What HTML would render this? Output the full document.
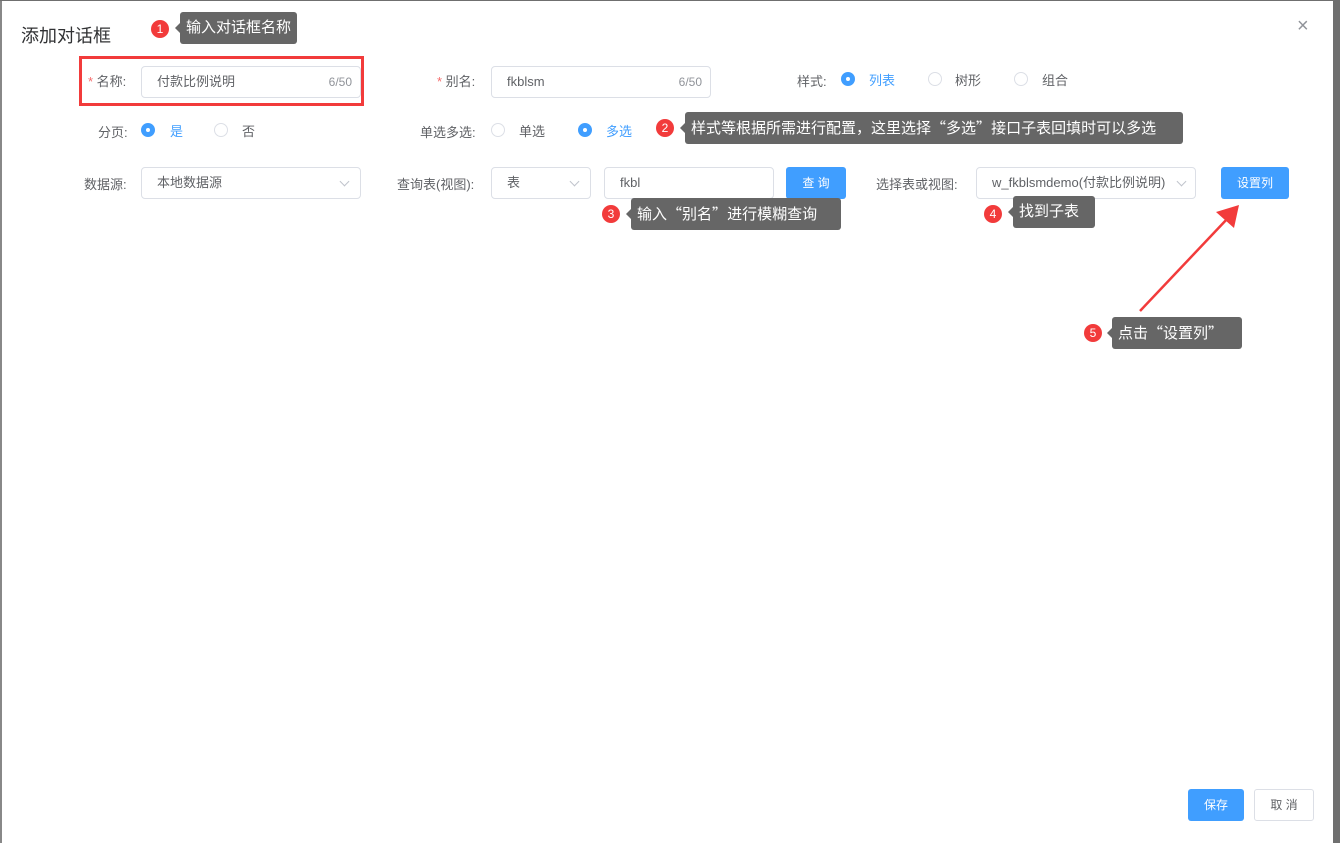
<!DOCTYPE html>
<html><head><meta charset="utf-8"><style>
*{margin:0;padding:0;box-sizing:border-box}
body{width:1340px;height:843px;position:relative;overflow:hidden;background:#6f6f6f;font-family:"Liberation Sans","Noto Sans CJK SC",sans-serif;font-size:13px;color:#606266}
.modal{position:absolute;left:0;top:1px;width:1333px;height:842px;background:#fff;border-left:2px solid #888}
.a{position:absolute;white-space:nowrap}
.lbl{color:#606266;font-size:13px}
.inp{position:absolute;height:32px;border:1px solid #dcdfe6;border-radius:4px;background:#fff;font-size:13px;color:#606266;line-height:30px;padding-left:15px}
.cnt{position:absolute;right:8px;top:0;color:#909399;font-size:12px}
.radio{position:absolute;width:14px;height:14px;border:1px solid #dcdfe6;border-radius:50%;background:#fff}
.radio.on{background:#409eff;border-color:#409eff}
.radio.on:after{content:"";position:absolute;left:4px;top:4px;width:4px;height:4px;border-radius:50%;background:#fff}
.blue{color:#409eff}
.btn{position:absolute;background:#409eff;color:#fff;border-radius:3px;text-align:center;font-size:12px}
.arr{position:absolute;right:12px;top:10px;width:7px;height:7px;border-right:1px solid #c0c4cc;border-bottom:1px solid #c0c4cc;transform:rotate(45deg)}
.tip{position:absolute;background:#666;color:#fff;font-size:15px;border-radius:3px;height:32px;line-height:32px;padding:0 6px}
.tip:before{content:"";position:absolute;left:-5px;top:11px;border:5px solid transparent;border-left:0;border-right-color:#666}
.q{font-family:"Noto Sans CJK SC",sans-serif}
.num{position:absolute;width:18px;height:18px;border-radius:50%;background:#f23b3b;color:#fff;font-size:12px;text-align:center;line-height:18px}
.req{color:#f56c6c}
</style></head><body>
<div class="modal"></div>
<div class="a" style="left:21px;top:22px;font-size:18px;color:#303133">添加对话框</div>
<div class="a" style="left:1297px;top:15px;font-size:20px;color:#909399;font-weight:300">×</div>

<div class="a" style="left:79px;top:56px;width:285px;height:50px;border:3px solid #f23b3b"></div>
<div class="a lbl" style="left:88px;top:71px"><span class="req">*</span> 名称:</div>
<div class="inp" style="left:141px;top:66px;width:220px">付款比例说明<span class="cnt">6/50</span></div>
<div class="a lbl" style="left:437px;top:71px"><span class="req">*</span> 别名:</div>
<div class="inp" style="left:491px;top:66px;width:220px">fkblsm<span class="cnt">6/50</span></div>
<div class="a lbl" style="left:797px;top:71px">样式:</div>
<div class="radio on" style="left:841px;top:72px"></div><div class="a blue" style="left:869px;top:70px">列表</div>
<div class="radio" style="left:928px;top:72px"></div><div class="a" style="left:955px;top:70px">树形</div>
<div class="radio" style="left:1014px;top:72px"></div><div class="a" style="left:1042px;top:70px">组合</div>

<div class="a lbl" style="left:98px;top:122px">分页:</div>
<div class="radio on" style="left:141px;top:123px"></div><div class="a blue" style="left:170px;top:121px">是</div>
<div class="radio" style="left:214px;top:123px"></div><div class="a" style="left:242px;top:121px">否</div>
<div class="a lbl" style="left:420px;top:122px">单选多选:</div>
<div class="radio" style="left:491px;top:123px"></div><div class="a" style="left:519px;top:121px">单选</div>
<div class="radio on" style="left:578px;top:123px"></div><div class="a blue" style="left:606px;top:121px">多选</div>

<div class="a lbl" style="left:84px;top:174px">数据源:</div>
<div class="inp" style="left:141px;top:167px;width:220px">本地数据源<span class="arr"></span></div>
<div class="a lbl" style="left:397px;top:174px">查询表(视图):</div>
<div class="inp" style="left:491px;top:167px;width:100px">表<span class="arr"></span></div>
<div class="inp" style="left:604px;top:167px;width:170px">fkbl</div>
<div class="btn" style="left:786px;top:167px;width:60px;height:32px;line-height:32px">查 询</div>
<div class="a lbl" style="left:876px;top:174px">选择表或视图:</div>
<div class="inp" style="left:976px;top:167px;width:220px;padding-left:15px">w_fkblsmdemo(付款比例说明)<span class="arr" style="right:10px"></span></div>
<div class="btn" style="left:1221px;top:167px;width:68px;height:32px;line-height:32px">设置列</div>

<div class="btn" style="left:1188px;top:789px;width:56px;height:32px;line-height:32px">保存</div>
<div class="a" style="left:1254px;top:789px;width:60px;height:32px;line-height:30px;border:1px solid #dcdfe6;border-radius:3px;text-align:center;font-size:12px;color:#606266">取 消</div>

<div class="num" style="left:151px;top:20px">1</div>
<div class="tip" style="left:180px;top:12px">输入对话框名称</div>
<div class="num" style="left:656px;top:119px">2</div>
<div class="tip" style="left:685px;top:112px;width:498px">样式等根据所需进行配置，这里选择<span class="q">“</span>多选<span class="q">”</span>接口子表回填时可以多选</div>
<div class="num" style="left:602px;top:205px">3</div>
<div class="tip" style="left:631px;top:198px;width:210px">输入<span class="q">“</span>别名<span class="q">”</span>进行模糊查询</div>
<div class="num" style="left:984px;top:205px">4</div>
<div class="tip" style="left:1013px;top:196px;width:82px">找到子表</div>
<div class="num" style="left:1084px;top:324px">5</div>
<div class="tip" style="left:1112px;top:317px;width:130px">点击<span class="q">“</span>设置列<span class="q">”</span></div>
<svg class="a" style="left:0;top:0" width="1340" height="843">
<line x1="1140" y1="311" x2="1228" y2="218" stroke="#f23b3b" stroke-width="2.5"/>
<polygon points="1239,205 1234,228 1216,212" fill="#f23b3b"/>
</svg>
</body></html>
